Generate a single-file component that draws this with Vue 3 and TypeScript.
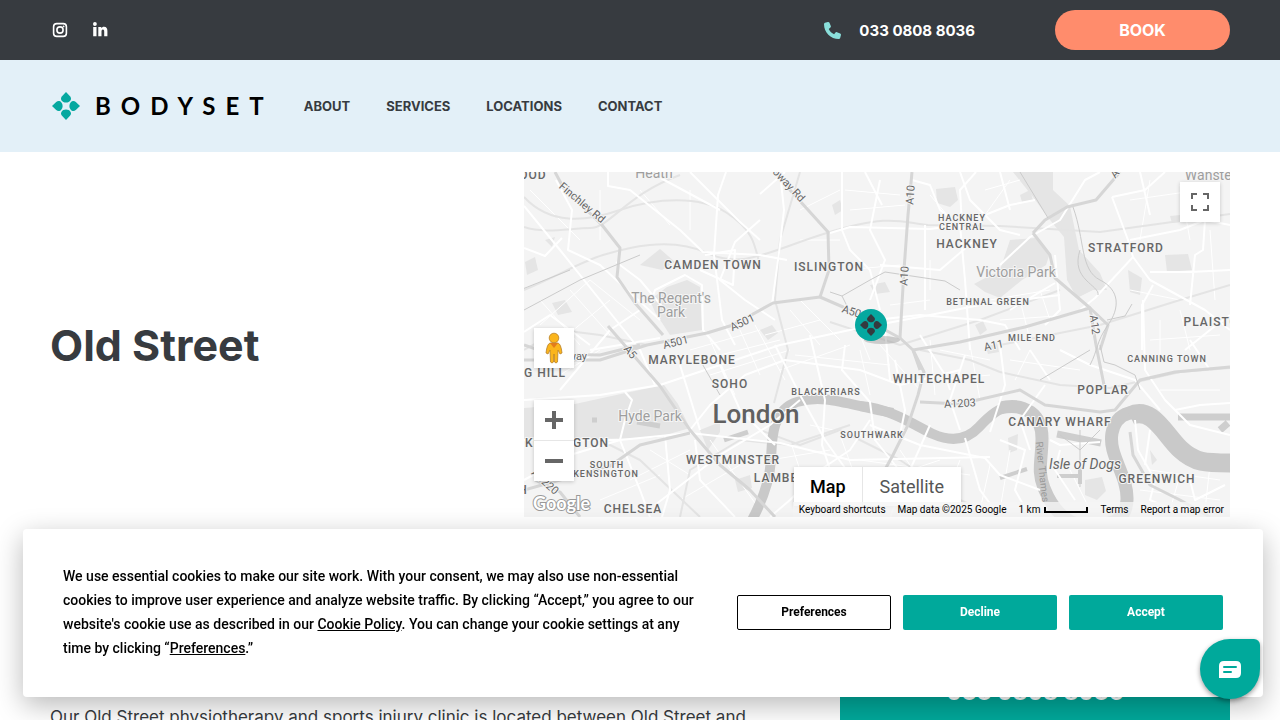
<script setup lang="ts">
interface Label { t: string; x: number; y: number; s: number; c?: string; r?: number }

const navItems = ['About', 'Services', 'Locations', 'Contact']

const labels: Label[] = [
  { t: 'OOD', x: 533, y: 179, s: 12 },
  { t: 'CAMDEN TOWN', x: 713, y: 269, s: 12 },
  { t: 'ISLINGTON', x: 829, y: 271, s: 12 },
  { t: 'HACKNEY', x: 962, y: 221, s: 9 },
  { t: 'CENTRAL', x: 962, y: 230, s: 9 },
  { t: 'HACKNEY', x: 967, y: 248, s: 12 },
  { t: 'STRATFORD', x: 1126, y: 252, s: 12 },
  { t: 'BETHNAL GREEN', x: 988, y: 305, s: 9 },
  { t: 'MILE END', x: 1032, y: 341, s: 9 },
  { t: 'PLAISTOW', x: 1217, y: 326, s: 12 },
  { t: 'CANNING TOWN', x: 1167, y: 362, s: 9 },
  { t: 'MARYLEBONE', x: 692, y: 364, s: 12 },
  { t: 'G HILL', x: 545, y: 377, s: 12 },
  { t: 'SOHO', x: 730, y: 388, s: 12 },
  { t: 'BLACKFRIARS', x: 826, y: 395, s: 9 },
  { t: 'WHITECHAPEL', x: 939, y: 383, s: 12 },
  { t: 'POPLAR', x: 1103, y: 394, s: 12 },
  { t: 'CANARY WHARF', x: 1060, y: 426, s: 12 },
  { t: 'SOUTHWARK', x: 872, y: 438, s: 9 },
  { t: 'KENSINGTON', x: 567, y: 447, s: 12 },
  { t: 'SOUTH', x: 607, y: 468, s: 9 },
  { t: 'KENSINGTON', x: 606, y: 477, s: 9 },
  { t: 'WESTMINSTER', x: 733, y: 464, s: 12 },
  { t: 'LAMBETH', x: 785, y: 482, s: 12 },
  { t: 'GREENWICH', x: 1157, y: 483, s: 12 },
  { t: 'CHELSEA', x: 633, y: 513, s: 12 },
  { t: 'H', x: 523, y: 494, s: 12 },
  { t: 'Heath', x: 654, y: 178, s: 14, c: 'park' },
  { t: 'Wanstead', x: 1216, y: 180, s: 14, c: 'park' },
  { t: "The Regent's", x: 671, y: 303, s: 14, c: 'park' },
  { t: 'Park', x: 671, y: 317, s: 14, c: 'park' },
  { t: 'Victoria Park', x: 1016, y: 277, s: 14, c: 'park' },
  { t: 'Hyde Park', x: 650, y: 421, s: 14, c: 'park' },
  { t: 'London', x: 756, y: 423, s: 26, c: 'city' },
  { t: 'Isle of Dogs', x: 1085, y: 469, s: 14, c: 'isle' },
  { t: 'Finchley Rd', x: 581, y: 206, s: 11, c: 'road', r: 40 },
  { t: 'Holloway Rd', x: 781, y: 181, s: 11, c: 'road', r: 47 },
  { t: 'A10', x: 912, y: 197, s: 11, c: 'road', r: -86 },
  { t: 'A10', x: 906, y: 278, s: 11, c: 'road', r: -86 },
  { t: 'A12', x: 1093, y: 327, s: 11, c: 'road', r: 82 },
  { t: 'A11', x: 994, y: 349, s: 11, c: 'road', r: -12 },
  { t: 'A12', x: 1120, y: 172, s: 11, c: 'road', r: -50 },
  { t: 'A501', x: 743, y: 326, s: 11, c: 'road', r: -25 },
  { t: 'A501', x: 676, y: 346, s: 11, c: 'road', r: -14 },
  { t: 'A501', x: 854, y: 316, s: 11, c: 'road', r: 18 },
  { t: 'A5', x: 629, y: 355, s: 11, c: 'road', r: 50 },
  { t: 'Westway', x: 565, y: 360, s: 11, c: 'road' },
  { t: 'A1203', x: 960, y: 407, s: 11, c: 'road', r: -3 },
  { t: 'A3220', x: 544, y: 485, s: 11, c: 'road', r: 42 },
  { t: 'River Thames', x: 1041, y: 474, s: 10, c: 'river', r: 84 },
]

const parks = [
  'M667 287L687 280L700 287L702 330L670 335L655 312L650 300Z',
  'M524 408L575 404L630 392L664 385L678 404L690 428L655 438L524 440Z',
  'M1013 172L1053 172L1053 190L1070 206L1079 250L1100 273L1107 290L1093 290L1077 298L1067 280L1064 237L1050 220L1033 197Z',
  'M974 284L1000 270L1010 240L1035 238L1050 253L1046 265L1022 280L1000 298L985 292Z',
  'M936 189L955 187L958 200L950 207L937 203Z',
  'M640 265L660 249L675 262L662 270Z',
  'M760 330L772 325L778 333L768 340Z',
  'M870 285L885 282L890 292L875 294Z',
  'M832 205L840 200L843 210L835 215Z',
  'M525 262L535 257L538 270L527 275Z',
  'M545 240L555 237L552 247Z',
  'M552 303L565 300L572 312L558 315Z',
  'M700 430L720 422L720 432L708 450Z',
  'M1085 480L1102 477L1106 491L1097 500L1085 495Z',
  'M1165 255L1188 254L1192 270L1167 272Z',
  'M1128 270L1142 278L1140 295L1130 292Z',
  'M1170 216L1180 215L1182 222L1172 223Z',
  'M975 325L983 321L987 330L980 335Z',
  'M1020 195L1030 190L1033 200L1022 202Z',
  'M735 480L750 475L752 488L738 492Z',
  'M985 345L997 342L999 352L988 354Z',
  'M1008 438L1018 434L1017 450L1009 453Z',
  'M1150 450L1157 460L1152 465Z',
]

const rail = [
  'M524 197C550 225 585 222 620 210S700 195 727 213S755 245 760 267',
  'M524 227C545 234 570 228 590 228S625 195 680 175',
  'M524 290C560 275 580 262 603 255S670 236 707 253S770 250 830 232S900 222 928 225L1000 226L1100 232L1230 214',
  'M524 350L560 330L600 335L647 345',
  'M1000 345L1100 325L1180 300L1230 285',
  'M760 430L800 445L840 430L900 460L960 500L1000 517',
  'M774 403L788 350L775 300L780 240L800 172',
  'M830 322L900 345L980 320L1060 290',
  'M680 517L690 470L740 440L790 445L850 425',
  'M600 440L640 460L700 517',
  'M920 350L970 360L1000 372L1060 385L1110 388L1180 372L1230 368',
]

const main = [
  'M555 172L563 187L602 225L620 248L617 277L635 303L663 335',
  'M524 360L600 360L647 345L707 333L733 325L773 303L820 297L843 307L900 338L913 350L920 370',
  'M776 172L790 190L828 232L829 270L820 297',
  'M912 172L908 215L904 270L900 338',
  'M608 326L660 386L690 430L720 465L750 490L775 517',
  'M913 350L960 342L1025 327L1090 308L1096 345L1106 395',
  'M1033 233L1050 255L1055 278L1090 308L1108 325L1100 350',
  'M1033 233L1045 220L1067 207L1096 200L1120 172',
  'M913 350L924 372L918 395L908 425L893 455L882 475',
  'M920 402L960 404L1020 390L1045 405L1100 412L1115 410L1140 380L1175 372L1230 367',
  'M690 433L640 445L610 466L560 480L524 490',
  'M535 480L560 492L580 517',
  'M1130 432L1133 455L1150 485L1180 500L1210 517',
  'M524 345L550 354L600 355L640 345',
]

const thin = [
  'M1020 172L1048 218M1073 207C1085 240 1080 270 1100 280S1120 308 1108 325S1098 350 1090 365',
  'M1080 250C1070 280 1100 285 1098 295M1107 320L1125 316L1132 304',
  'M830 292L842 296L870 280L885 272L945 281L960 290',
  'M1100 345L1104 362L1115 365L1135 375L1140 390',
  'M524 310L580 280L640 255M700 360L720 395M1040 380L1090 350',
  'M1100 430L1080 450L1060 435M1080 430L1080 487',
  'M842 296L849 310M520 290L570 270',
]

const white = [
  'M524 206L560 250L600 300L640 350L655 385', 'M556 180L572 210L568 250L600 265L660 320',
  'M524 248L545 256L562 238M616 262L640 280L665 310',
  'M608 172L608 186L630 190L680 230L703 252L760 255L787 260', 'M655 175L720 210M690 172L740 222L760 240',
  'M726 172L718 195L714 255L722 320L735 345', 'M760 220L735 242L720 280L745 300L775 320',
  'M650 305L655 290L685 275L702 285L703 330L720 350', 'M705 255L735 250L733 285L700 270',
  'M524 332L550 315L590 345M560 390L610 330L640 310', 'M524 400L600 395L660 385L705 370L780 345L850 330L930 315L980 305L1060 295',
  'M590 350L620 345L660 338', 'M625 392L632 400L625 420L620 440', 'M524 440L620 440L690 433L780 443L850 460L990 457',
  'M524 480L570 455L620 440L640 490L650 517', 'M665 435L670 490L662 517M695 440L700 480L735 517',
  'M655 505L720 455L770 425L800 400', 'M690 430L710 405L745 375L785 360L860 370L900 385L960 370',
  'M720 365L740 410L775 445M680 365L700 430', 'M775 345L800 395L825 440L850 475',
  'M810 335L825 400L822 445L840 500', 'M845 345L842 370L870 402L875 440L915 490',
  'M870 420L850 450L820 470L790 500L770 517', 'M870 425L920 445L985 458L1000 475L1040 490',
  'M930 425L910 470L890 517M965 438L980 490L1000 517', 'M895 360L905 410L900 435M965 355L950 400L960 430M1000 345L1005 385L990 432',
  'M760 194L785 172M780 172L784 210L780 245L772 305', 'M842 172L842 230L850 250L870 270L880 310',
  'M880 180L870 230L885 260L870 300M865 172L882 205', 'M830 233L850 227L930 229L960 225L1010 205L1035 200',
  'M912 180L930 185L940 210L960 225L965 280L970 350', 'M925 225L925 310M880 265L940 270L975 240',
  'M960 172L970 200L1000 230L1020 235M1000 172L1010 210', 'M976 172L960 190L962 225',
  'M875 320L920 315L980 320L1005 325L1020 350', 'M885 330L890 380M920 335L945 375L950 390',
  'M1000 265L1030 237L1060 220L1085 180L1100 172', 'M1010 310L1055 283M1055 255L1060 310L1045 325',
  'M1112 197L1128 240L1133 257L1150 280L1205 310L1230 330', 'M1133 257L1095 298L1080 310',
  'M1130 240L1180 230L1205 220L1230 225', 'M1205 220L1203 250L1195 255L1190 305M1150 272L1190 272L1230 270', 'M1153 285L1142 305L1142 350',
  'M1140 172L1150 215M1112 197L1145 190L1165 172', 'M1185 350L1210 330L1230 315M1190 340L1210 370',
  'M1143 300L1145 370L1165 400L1190 425L1230 435', 'M1175 410L1200 405L1230 403',
  'M1060 350L1090 365L1135 380L1160 410', 'M1030 350L1050 380M1045 385L1020 420L1030 450',
  'M1050 440L1060 445L1100 442M1060 450L1055 470L1075 500', 'M1135 420L1138 450L1155 480L1150 500L1190 517',
  'M1190 480L1195 500L1225 485M1150 430L1145 465', 'M1000 440L1025 450L1015 490L1030 517',
]

const minor = [
  'M540 300L580 345M570 290L610 335M590 280L640 320M540 325L590 280M555 345L610 300M530 190L580 240M600 190L600 240M640 190L670 225M690 190L690 230M560 375L600 350M710 340L735 395M740 330L760 375M755 325L785 380M690 350L760 330M700 360L780 340M710 375L790 350',
  'M650 450L690 475M630 480L690 450M600 500L660 475M680 500L740 465M710 440L760 510M770 460L830 450M790 440L810 500M840 435L860 490M810 425L880 440M860 460L970 475M850 490L940 460M900 450L940 510M960 460L940 510M990 465L980 510',
  'M790 310L820 345M800 300L840 340M765 335L820 320M780 370L850 345M795 355L890 365M860 350L870 395M880 345L920 390M930 340L935 395M940 350L990 360M940 380L990 375M970 345L980 400M850 310L870 360M890 305L930 300M930 260L930 290',
  'M845 190L900 195M850 210L905 205M800 210L840 190M800 240L840 240M845 270L900 265M930 195L960 230M985 190L1020 180M985 215L1010 180M990 300L1050 290M1000 320L1070 315M1020 300L1030 340M1040 290L1050 320M1010 360L1080 370M1030 350L1015 380',
  'M1130 200L1200 190M1150 180L1140 240M1180 185L1190 240M1130 290L1180 300M1210 230L1215 300M1160 320L1160 360M1180 310L1190 350M1150 340L1220 335M1160 390L1220 390M1150 470L1220 480M1180 475L1170 510M1210 465L1205 510M1010 450L1000 510M1070 470L1090 510M1140 490L1220 500',
]
</script>

<template>
  <div class="page">
    <svg class="defs" width="0" height="0" aria-hidden="true">
      <defs>
        <g id="petals">
          <path id="petal" d="M14 0L18 4.200C20.500 7 18 10.600 14 10.600S7.500 7 10 4.200Z" />
          <use href="#petal" transform="rotate(90 14 14)" />
          <use href="#petal" transform="rotate(180 14 14)" />
          <use href="#petal" transform="rotate(270 14 14)" />
        </g>
      </defs>
    </svg>

    <div class="topbar">
      <div class="social">
        <a href="#" aria-label="Instagram">
          <svg width="16" height="16" viewBox="0 0 16 16" fill="none" stroke="#fff" stroke-width="1.600">
            <rect x="1.600" y="1.600" width="12.800" height="12.800" rx="3.200" /><circle cx="8" cy="8" r="3.100" /><circle cx="11.600" cy="4.400" r=".9" fill="#fff" stroke="none" />
          </svg>
        </a>
        <a href="#" aria-label="LinkedIn">
          <svg width="16" height="16" viewBox="0 0 16 16" fill="#fff">
            <circle cx="2.900" cy="2" r="1.900" /><path d="M1.200 5h3.300v9.200H1.200zM6.300 5h3v1.300c.5-.9 1.500-1.500 2.700-1.500 2.600 0 3.400 1.700 3.400 4.200v5.200h-3.200V9.700c0-1.200-.2-2.200-1.300-2.200S9.500 8.500 9.500 9.700v4.500H6.300z" />
          </svg>
        </a>
      </div>
      <a class="phone" href="tel:03308088036">
        <svg width="17" height="17" viewBox="0 0 512 512" fill="#8adfdb"><path d="M164.900 24.600c-7.700-18.600-28-28.500-47.400-23.200l-88 24C12.100 30.200 0 46 0 64c0 247.400 200.600 448 448 448 18 0 33.800-12.100 38.600-29.500l24-88c5.300-19.400-4.600-39.700-23.200-47.400l-96-40c-16.300-6.800-35.200-2.100-46.300 11.600L304.700 368C234.300 334.700 177.300 277.700 144 207.300l49.300-40.300c13.700-11.200 18.400-30 11.600-46.300l-40-96z" /></svg>
        <span>033 0808 8036</span>
      </a>
      <a class="book" href="#">BOOK</a>
    </div>

    <header class="header">
      <a class="logo" href="#">
        <svg width="28" height="28" viewBox="0 0 28 28" fill="#05a8a0" aria-hidden="true"><use href="#petals" /></svg>
        <span>BODYSET</span>
      </a>
      <nav>
        <a v-for="item in navItems" :key="item" href="#">{{ item }}</a>
      </nav>
    </header>

    <main>
      <section class="hero">
        <h1>Old Street</h1>
        <div class="map">
          <svg class="tiles" viewBox="524 172 706 345" preserveAspectRatio="xMidYMid slice" role="img" aria-label="Map of London">
            <rect x="524" y="172" width="706" height="345" fill="#f4f4f4" />
            <g fill="#e5e5e5"><path v-for="p in parks" :key="p" :d="p" /></g>
            <g fill="none" stroke-linejoin="round">
              <path v-for="p in minor" :key="p" :d="p" stroke="#fff" stroke-width="1" />
              <path v-for="p in rail" :key="p" :d="p" stroke="#e4e4e4" stroke-width="2" />
              <g stroke="#c9c9c9">
                <path d="M752 520C766 494 770 475 771 460S770 410 797 402S845 404 893 413" stroke-width="10" />
                <path d="M860 406C893 409 915 426 933 434S967 440 979 427S1000 408 1007 407" stroke-width="10" />
                <path d="M1000 408C1025 402 1042 415 1042 438S1037 470 1044 488S1065 525 1085 525S1126 525 1127 500S1108 455 1112 433S1138 407 1153 420S1180 463 1205 463H1232" stroke-width="13" />
                <path d="M1130 416C1152 405 1165 435 1180 449S1205 463 1232 463" stroke-width="19" />
              </g>
              <g stroke="#cecece"><path d="M1178 417H1230M1220 430L1228 423M1057 434L1101 443" stroke-width="7" /><path d="M1000 478L1027 469M1057 476L1078 476M1080 467L1080 484" stroke-width="4" /><path d="M637 422L660 426M592 420L597 420M724 440L748 432" stroke-width="5" /></g>
              <path v-for="p in white" :key="p" :d="p" stroke="#fff" stroke-width="2" />
              <path v-for="p in main" :key="p" :d="p" stroke="#d6d6d6" stroke-width="3" />
              <path v-for="p in thin" :key="p" :d="p" stroke="#cbcbcb" stroke-width="1" />
            </g>
            <text
              v-for="(l, i) in labels" :key="i" :x="l.x" :y="l.y" :font-size="l.s" :class="l.c ?? 'area'"
              :transform="l.r ? `rotate(${l.r} ${l.x} ${l.y - 2})` : undefined"
            >{{ l.t }}</text>
            <ellipse cx="882" cy="340" rx="18" ry="4" fill="#999" opacity=".45" />
            <circle cx="871" cy="325" r="16" fill="#05a8a0" />
            <svg x="860" y="314" width="22" height="22" viewBox="0 0 28 28" fill="#343a3f"><use href="#petals" /></svg>
            <text x="533" y="510" class="google">Google</text>
          </svg>

          <button class="ctl full" aria-label="Toggle fullscreen view">
            <svg width="18" height="18" viewBox="0 0 18 18" fill="none" stroke="#666" stroke-width="2"><path d="M1 6V1H6M12 1H17V6M17 12V17H12M6 17H1V12" /></svg>
          </button>
          <button class="ctl pegman" aria-label="Street View">
            <svg width="18" height="32" viewBox="0 0 18 32">
              <path d="M5 11Q2 12 1 21L3 22L5 18L5.500 30Q7 32 8.500 30L9 22L9.500 30Q11 32 12.500 30L13 18L15 22L17 21Q16 12 13 11Z" fill="#fbb51c" stroke="#b9822a" stroke-width=".8" />
              <path d="M5 11H13L9 16Z" fill="#e37c1c" />
              <circle cx="9" cy="6" r="4.800" fill="#fbb51c" stroke="#b9822a" stroke-width=".8" />
            </svg>
          </button>
          <div class="zoom">
            <button aria-label="Zoom in"><svg width="18" height="18" viewBox="0 0 18 18" fill="#666"><path d="M7 0H11V7H18V11H11V18H7V11H0V7H7Z" /></svg></button>
            <button aria-label="Zoom out"><svg width="18" height="18" viewBox="0 0 18 18" fill="#666"><path d="M0 7H18V11H0Z" /></svg></button>
          </div>
          <div class="types"><button class="on">Map</button><button>Satellite</button></div>
          <div class="credits">
            <button>Keyboard shortcuts</button><span>Map data ©2025 Google</span>
            <span class="scale">1 km <i></i></span><a href="#">Terms</a><a href="#">Report a map error</a>
          </div>
        </div>
      </section>
      <section class="content">
        <p>Our Old Street physiotherapy and sports injury clinic is located between Old Street and</p>
        <aside><a href="tel:03308088036">033 0808 8036</a></aside>
      </section>
    </main>

    <div class="cookie" role="dialog" aria-label="Cookie consent">
      <p>We use essential cookies to make our site work. With your consent, we may also use non-essential cookies to improve user experience and analyze website traffic. By clicking “Accept,” you agree to our website's cookie use as described in our <a href="#">Cookie Policy</a>. You can change your cookie settings at any time by clicking “<a href="#">Preferences</a>.”</p>
      <div class="choices">
        <button class="plain">Preferences</button><button>Decline</button><button>Accept</button>
      </div>
    </div>
    <button class="chat" aria-label="Open chat">
      <svg width="22" height="17" viewBox="0 0 22 17"><path d="M5 0H17Q22 0 22 5V12Q22 17 17 17H0V5Q0 0 5 0Z" fill="#fff" /><path d="M5 6H17M5 11H12" stroke="#00a99b" stroke-width="2" stroke-linecap="round" /></svg>
    </button>
  </div>
</template>

<style>
body { overflow: hidden; }
</style>

<style scoped>
.page { height: 100vh; overflow: hidden; background: #fff; color: #373b40; font-family: Inter, "Liberation Sans", sans-serif; }
.defs { position: absolute; }
a { color: inherit; text-decoration: none; }
button { font: inherit; color: inherit; border: 0; padding: 0; background: none; cursor: pointer; }
svg { display: block; }

.topbar { display: flex; align-items: center; height: 60px; padding: 0 50px; background: #373b40; color: #fff; }
.social { display: flex; gap: 24px; padding-left: 2px; flex: 1; }
.phone { display: flex; align-items: center; gap: 18px; margin-right: 80px; font-size: 15px; font-weight: 700; }
.book { width: 175px; line-height: 40px; border-radius: 20px; background: #ff8c6c; text-align: center; font-size: 16px; font-weight: 700; }

.header { display: flex; align-items: center; gap: 30px; height: 92px; padding: 0 52px; box-sizing: border-box; background: #e3f0f8; }
.logo { display: flex; align-items: center; gap: 15px; color: #000; font: 700 24px/28px Lato, sans-serif; letter-spacing: 10px; }
nav { display: flex; gap: 36px; font-size: 13px; line-height: 16px; font-weight: 700; text-transform: uppercase; }

.hero { display: grid; grid-template-columns: 474fr 706fr; align-items: center; padding: 20px 50px; }
h1 { margin: 0; font-size: 43px; line-height: 52px; font-weight: 700; }
.map { position: relative; height: 345px; overflow: hidden; font-family: Roboto, sans-serif; }
.tiles { width: 100%; height: 100%; }
.tiles text { font-family: Roboto, sans-serif; text-anchor: middle; paint-order: stroke; stroke: #f5f5f5; stroke-width: 2px; fill: #666; }
.tiles .area { font-weight: 500; letter-spacing: 1px; }
.tiles .park { fill: #9e9e9e; }
.tiles .city { font-weight: 500; fill: #606060; }
.tiles .isle { font-style: italic; }
.tiles .river { fill: #999; stroke: none; }
.tiles .google { text-anchor: start; font-family: Lato, sans-serif; font-size: 18px; font-weight: 700; fill: #fff; stroke: #999; }

.ctl { position: absolute; display: grid; place-items: center; width: 40px; height: 40px; background: #fff; box-shadow: 0 1px 4px rgba(0, 0, 0, .2); }
.full { top: 10px; right: 10px; }
.pegman { left: 10px; bottom: 149px; }
.zoom { position: absolute; left: 10px; bottom: 36px; width: 40px; background: #fff; box-shadow: 0 1px 4px rgba(0, 0, 0, .2); }
.zoom button { display: grid; place-items: center; width: 40px; height: 40px; }
.zoom button + button { height: 41px; border-top: 1px solid #e6e6e6; }
.types { position: absolute; right: 269px; bottom: 11px; display: flex; background: #fff; box-shadow: 0 1px 4px rgba(0, 0, 0, .2); }
.types button { height: 39px; padding: 0 17px; font-size: 18px; color: #565656; }
.types .on { padding: 0 16px; color: #000; font-weight: 500; border-right: 1px solid #e6e6e6; }
.credits { position: absolute; right: 0; bottom: 0; display: flex; align-items: center; gap: 12px; height: 15px; padding: 0 6px; background: rgba(245, 245, 245, .8); color: #000; font-size: 10px; white-space: nowrap; }
.scale { display: flex; align-items: center; gap: 4px; }
.scale i { width: 40px; height: 4px; border: 2px solid #000; border-top: 0; }

.content { display: grid; grid-template-columns: minmax(0, 1fr) 390px; gap: 40px; padding: 0 50px; }
.content p { margin: 168px 0 0; font-size: 17px; line-height: 24px; }
.content aside { height: 200px; padding-top: 139px; background: #00a99b; color: #fff; text-align: center; font-size: 23px; line-height: 32px; font-weight: 700; }

.cookie { position: fixed; left: 23px; right: 17px; bottom: 23px; display: flex; align-items: center; gap: 40px; box-sizing: border-box; padding: 35px 40px 37px; border-radius: 4px; background: #fff; box-shadow: 0 8px 28px rgba(0, 0, 0, .28); color: #000; font-family: Roboto, sans-serif; }
.cookie p { flex: 1; margin: 0; font-size: 14px; line-height: 24px; font-weight: 500; }
.cookie p a { text-decoration: underline; }
.choices { display: flex; gap: 12px; }
.choices button { box-sizing: border-box; width: 154px; height: 35px; border-radius: 2px; background: #00a99b; color: #fff; font-size: 12px; font-weight: 700; }
.choices .plain { border: 1px solid #000; background: #fff; color: #000; }
.chat { position: fixed; right: 20px; bottom: 21px; display: grid; place-items: center; width: 60px; height: 60px; border-radius: 30px 6px 30px 30px; background: #00a99b; box-shadow: 0 2px 5px rgba(0, 0, 0, .4); }
</style>
